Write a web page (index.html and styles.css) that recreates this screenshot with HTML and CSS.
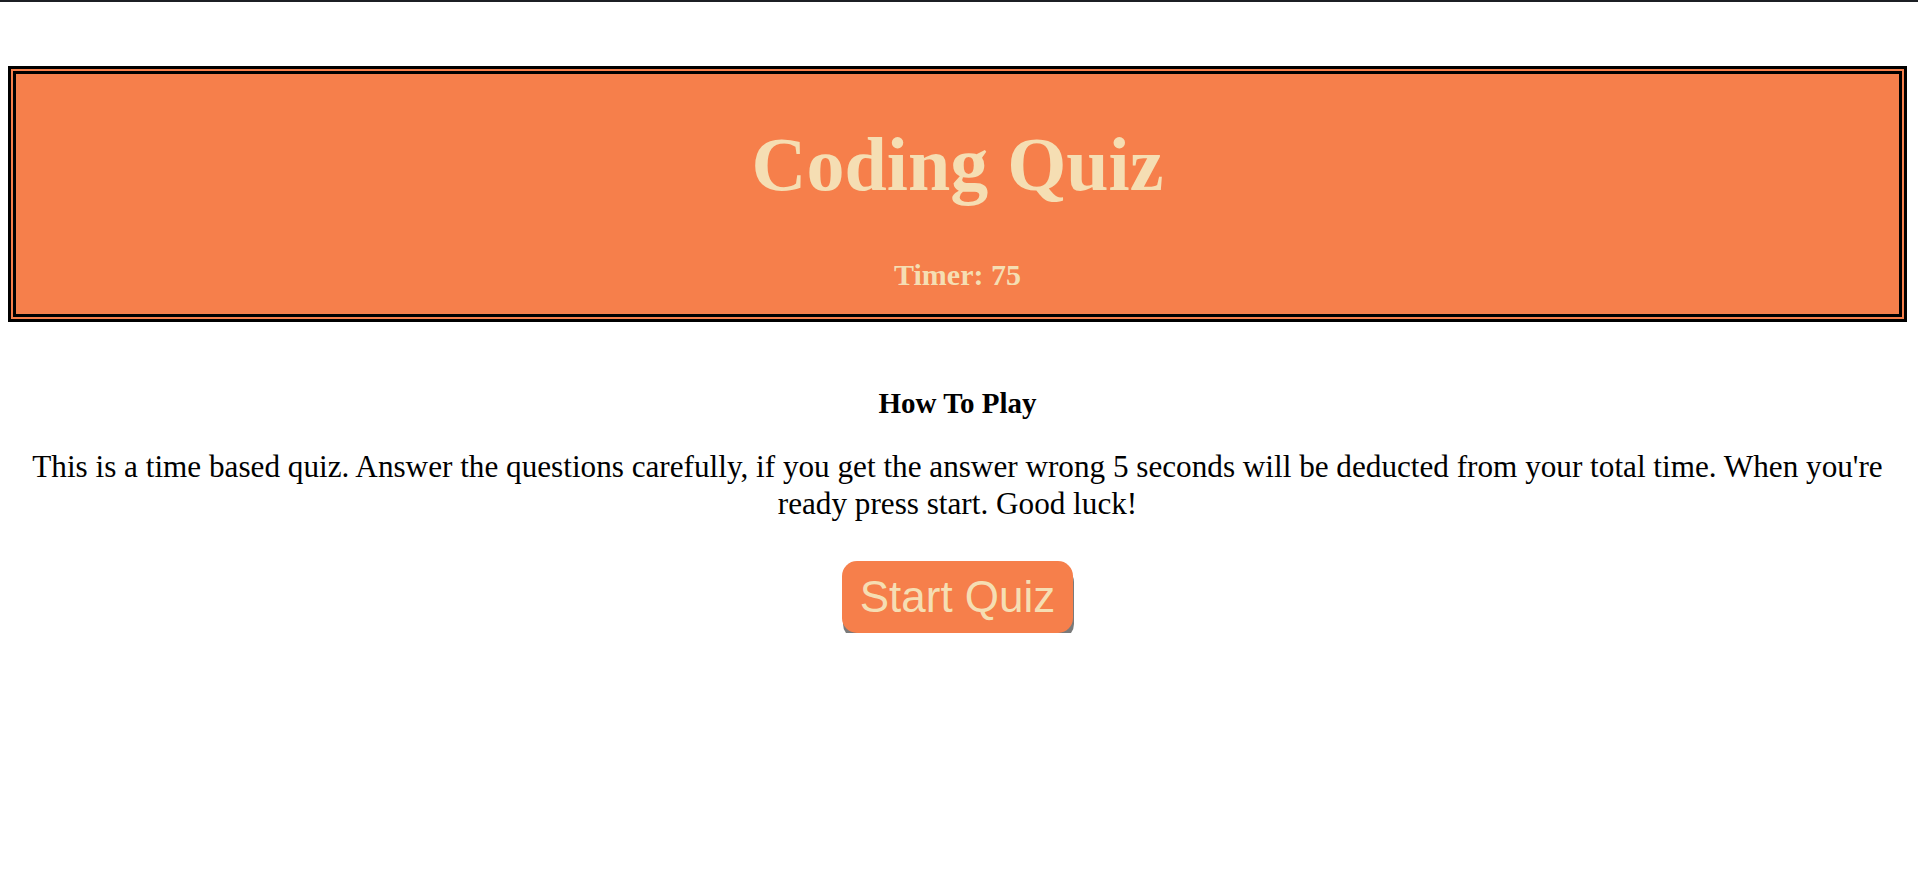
FILE: index.html
```html
<!DOCTYPE html>
<html lang="en">
<head>
<meta charset="utf-8">
<title>Coding Quiz</title>
<link rel="stylesheet" href="styles.css">
</head>
<body>
<div class="topline"></div>
<div class="page">
  <header class="banner">
    <h1 class="title">Coding Quiz</h1>
    <h3 class="timer">Timer: 75</h3>
  </header>
  <main class="intro">
    <h3 class="intro-title">How To Play</h3>
    <p class="intro-text">This is a time based quiz. Answer the questions carefully, if you get the answer wrong 5 seconds will be deducted from your total time. When you're ready press start. Good luck!</p>
    <button class="start-btn" type="button">Start Quiz</button>
  </main>
</div>
</body>
</html>
```
FILE: styles.css
```css
html, body {
  margin: 0;
  padding: 0;
  background: #ffffff;
}
body {
  font-family: "Liberation Serif", "Times New Roman", serif;
  color: #000;
}
.topline {
  height: 2px;
  background: #1c1f24;
}
.page {
  padding: 0 11px 0 8px;
}
.banner {
  margin-top: 64px;
  border: 8px double #000;
  background: #f67f4b;
  color: #f5deb3;
  text-align: center;
  padding: 47px 0 21px;
  display: flex;
  flex-direction: column;
  align-items: center;
}
.title {
  margin: 0;
  font-size: 76px;
  line-height: 1.15;
  font-weight: bold;
}
.timer {
  margin: 50px 0 0;
  font-size: 30px;
  line-height: 1.15;
  font-weight: bold;
}
.intro {
  text-align: center;
  display: flex;
  flex-direction: column;
  align-items: center;
  padding-top: 65px;
}
.intro-title {
  margin: 0;
  font-size: 29px;
  line-height: 1.15;
  font-weight: bold;
}
.intro-text {
  margin: 29px 0 0;
  font-size: 31.2px;
  line-height: 36.5px;
}
.start-btn {
  margin-top: 39px;
  font-family: "Liberation Sans", Arial, sans-serif;
  font-size: 44px;
  line-height: 50px;
  color: #f5deb3;
  background: #f67f4b;
  border: none;
  border-radius: 15px;
  padding: 11px 18px;
  box-shadow: 1px 6px 0 #7a7a7a;
  cursor: pointer;
}
```
